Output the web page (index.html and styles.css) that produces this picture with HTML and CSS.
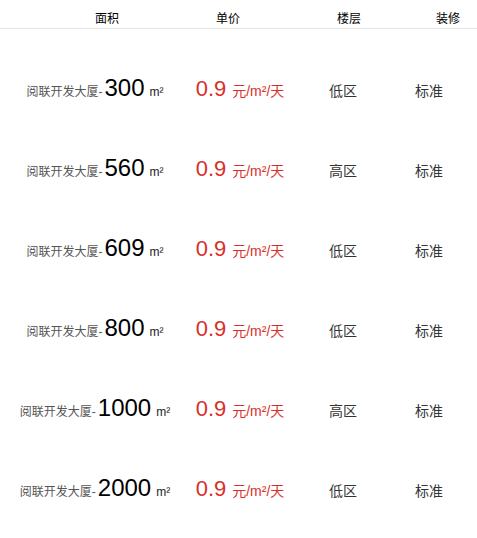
FILE: index.html
```html
<!DOCTYPE html>
<html lang="zh">
<head>
<meta charset="utf-8">
<link rel="stylesheet" href="styles.css">
</head>
<body>
<div class="head">
  <span>面积</span><span>单价</span><span>楼层</span><span>装修</span>
</div>
<div class="list">
  <div class="row"><div class="c1"><span class="name">阅联开发大厦-</span><span class="num">300</span><span class="unit">m²</span></div><div class="c2"><span class="price">0.9</span><span class="punit">元/m²/天</span></div><div class="c3">低区</div><div class="c4">标准</div></div>
  <div class="row"><div class="c1"><span class="name">阅联开发大厦-</span><span class="num">560</span><span class="unit">m²</span></div><div class="c2"><span class="price">0.9</span><span class="punit">元/m²/天</span></div><div class="c3">高区</div><div class="c4">标准</div></div>
  <div class="row"><div class="c1"><span class="name">阅联开发大厦-</span><span class="num">609</span><span class="unit">m²</span></div><div class="c2"><span class="price">0.9</span><span class="punit">元/m²/天</span></div><div class="c3">低区</div><div class="c4">标准</div></div>
  <div class="row"><div class="c1"><span class="name">阅联开发大厦-</span><span class="num">800</span><span class="unit">m²</span></div><div class="c2"><span class="price">0.9</span><span class="punit">元/m²/天</span></div><div class="c3">低区</div><div class="c4">标准</div></div>
  <div class="row"><div class="c1"><span class="name">阅联开发大厦-</span><span class="num">1000</span><span class="unit">m²</span></div><div class="c2"><span class="price">0.9</span><span class="punit">元/m²/天</span></div><div class="c3">高区</div><div class="c4">标准</div></div>
  <div class="row"><div class="c1"><span class="name">阅联开发大厦-</span><span class="num">2000</span><span class="unit">m²</span></div><div class="c2"><span class="price">0.9</span><span class="punit">元/m²/天</span></div><div class="c3">低区</div><div class="c4">标准</div></div>
</div>
</body>
</html>
```
FILE: styles.css
```css
* { box-sizing: border-box; }
body {
  margin: 0;
  background: #fff;
  font-family: "Liberation Sans", Arial, "Noto Sans CJK SC", sans-serif;
  color: #333;
}
.head {
  display: grid;
  grid-template-columns: 121px 121px 99px auto;
  padding-left: 95px;
  height: 29px;
  padding-top: 11px;
  font-size: 12px;
  line-height: 16px;
  color: #000;
  border-bottom: 1px solid #e6e6e6;
}
.list {
  padding-top: 21px;
}
.row {
  display: grid;
  grid-template-columns: 190px 100px 106px 66px;
  height: 80px;
  align-items: center;
  text-align: center;
  white-space: nowrap;
}
.c1, .c2 { line-height: 26px; }
.name { font-size: 12px; color: #555; margin-right: 2px; }
.num { font-size: 24px; color: #000; }
.unit { font-size: 12px; color: #222; margin-left: 5px; }
.price { font-size: 22px; color: #d7302a; }
.punit { font-size: 14px; color: #d7302a; margin-left: 6px; }
.c3, .c4 { font-size: 14px; color: #333; }
```
